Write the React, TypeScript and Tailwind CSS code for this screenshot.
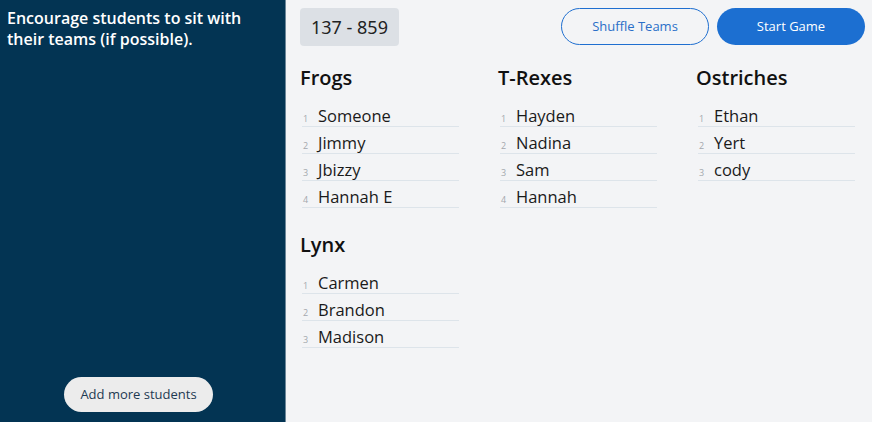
import React from "react";

const teams: { name: string; members: string[] }[] = [
  { name: "Frogs", members: ["Someone", "Jimmy", "Jbizzy", "Hannah E"] },
  { name: "T-Rexes", members: ["Hayden", "Nadina", "Sam", "Hannah"] },
  { name: "Ostriches", members: ["Ethan", "Yert", "cody"] },
  { name: "Lynx", members: ["Carmen", "Brandon", "Madison"] },
];

function Team({ name, members }: { name: string; members: string[] }) {
  return (
    <div className="w-[198px]">
      <h2 className="text-[20px] leading-[28px] font-semibold text-[#111]">{name}</h2>
      <ol className="mt-2 ml-[2px] w-[157px]">
        {members.map((m, i) => (
          <li
            key={m}
            className="flex h-[27px] items-baseline pt-[5px] border-b border-[#dde4ea] text-[16.5px] leading-[22px] text-[#1a1a1a]"
          >
            <span className="w-[16px] pl-[1px] text-[9px] leading-[9px] text-[#a3a8ad]">{i + 1}</span>
            <span>{m}</span>
          </li>
        ))}
      </ol>
    </div>
  );
}

export default function App() {
  return (
    <div
      className="flex h-[422px] w-[872px] overflow-hidden"
      style={{ fontFamily: '"Open Sans", "Noto Sans", sans-serif' }}
    >
      <aside className="flex w-[286px] shrink-0 flex-col justify-between border-r border-[#6d8799] bg-[#033453] pl-[7px] pt-[8px] pb-[10px]">
        <p className="text-[16px] leading-[21px] font-semibold text-white">
          Encourage students to sit with
          <br />
          their teams (if possible).
        </p>
        <button className="ml-[57px] h-[35px] w-[149px] rounded-full bg-[#ececec] text-[13px] text-[#1e3a52]">
          Add more students
        </button>
      </aside>
      <main className="min-w-0 flex-1 bg-[#f3f4f6] pl-[14px] pr-[7px] pt-[8px]">
        <div className="flex items-start justify-between">
          <div
            className="flex h-[38px] items-center rounded-[4px] bg-[#dce0e5] px-[11px] text-[18px] text-[#222]"
            style={{ fontFamily: '"Noto Sans", sans-serif' }}
          >
            137 - 859
          </div>
          <div className="flex gap-[8px]">
            <button className="h-[37px] w-[148px] rounded-full border border-[#1f6fd0] bg-transparent text-[13px] text-[#2a6fc8]">
              Shuffle Teams
            </button>
            <button className="h-[37px] w-[148px] rounded-full bg-[#1c6fd1] text-[13px] text-white">
              Start Game
            </button>
          </div>
        </div>
        <div className="mt-[18px] grid w-[594px] grid-cols-[repeat(3,198px)] gap-y-[23px]">
          {teams.map((t) => (
            <Team key={t.name} name={t.name} members={t.members} />
          ))}
        </div>
      </main>
    </div>
  );
}
